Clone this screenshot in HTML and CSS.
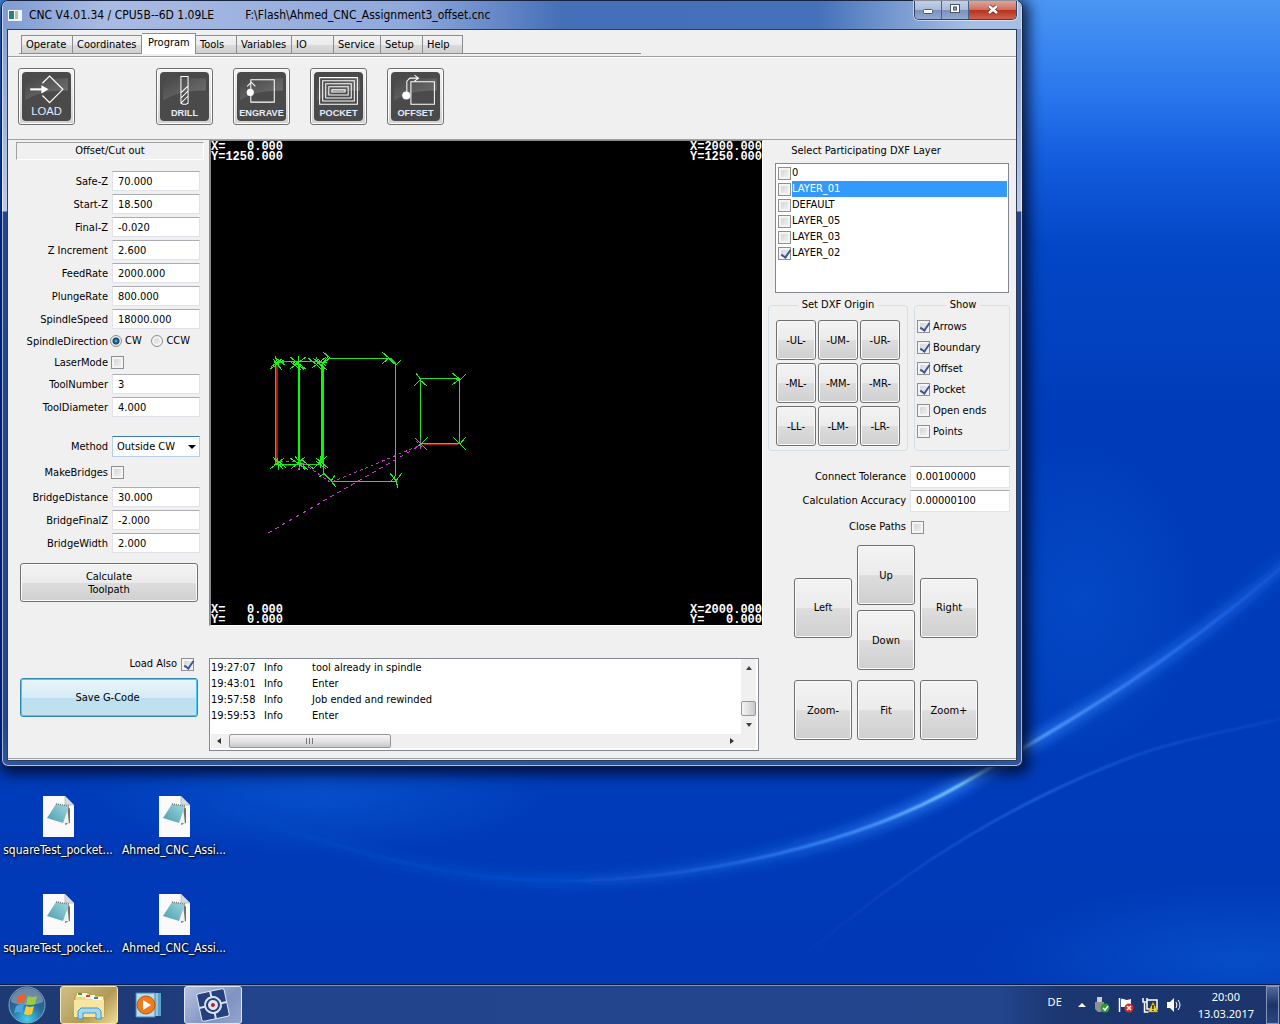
FILE: index.html
```html
<!DOCTYPE html>
<html lang="en">
<head>
	<meta charset="utf-8" />
	<title>CNC V4.01.34</title>
	<link rel="stylesheet" href="styles.css">
</head>
<body>

<svg class="wallpaper" viewBox="0 0 1280 1024" preserveAspectRatio="none" aria-hidden="true">
	<defs>
		<linearGradient id="sky" x1="0" y1="0" x2="0" y2="1">
			<stop offset="0" stop-color="#4a96f3"/>
			<stop offset=".09" stop-color="#2a77ee"/>
			<stop offset=".16" stop-color="#125bdc"/>
			<stop offset=".24" stop-color="#0347c6"/>
			<stop offset=".4" stop-color="#003cba"/>
			<stop offset=".75" stop-color="#003cba"/>
			<stop offset="1" stop-color="#0037b4"/>
		</linearGradient>
		<linearGradient id="ray" gradientUnits="userSpaceOnUse" x1="200" y1="0" x2="1280" y2="0">
			<stop offset="0" stop-color="#0a58d0" stop-opacity="0"/>
			<stop offset=".35" stop-color="#0a50cc" stop-opacity=".7"/>
			<stop offset=".5" stop-color="#1f6ce4"/>
			<stop offset=".62" stop-color="#4a96fa"/>
			<stop offset=".7" stop-color="#83d2ff"/>
			<stop offset=".8" stop-color="#4d94f8"/>
			<stop offset=".92" stop-color="#2468ea"/>
			<stop offset="1" stop-color="#1553d4"/>
		</linearGradient>
		<linearGradient id="glow" gradientUnits="userSpaceOnUse" x1="200" y1="0" x2="1280" y2="0">
			<stop offset="0" stop-color="#0a58d0" stop-opacity="0"/>
			<stop offset=".5" stop-color="#0c55d2" stop-opacity=".8"/>
			<stop offset=".7" stop-color="#2a78f0"/>
			<stop offset="1" stop-color="#0f52d0"/>
		</linearGradient>
		<linearGradient id="ray2" gradientUnits="userSpaceOnUse" x1="780" y1="0" x2="1280" y2="0">
			<stop offset="0" stop-color="#1058d6" stop-opacity="0"/>
			<stop offset=".5" stop-color="#2467e4"/>
			<stop offset="1" stop-color="#0f52cc" stop-opacity=".5"/>
		</linearGradient>
		<radialGradient id="pool"><stop offset="0" stop-color="#0a5ad4"/><stop offset="1" stop-color="#0a5ad4" stop-opacity="0"/></radialGradient>
		<filter id="soft" x="-10%" y="-50%" width="120%" height="200%"><feGaussianBlur stdDeviation="6"/></filter>
		<filter id="thin" x="-10%" y="-50%" width="120%" height="200%"><feGaussianBlur stdDeviation="1"/></filter>
	</defs>
	<rect width="1280" height="1024" fill="url(#sky)"/>
	<ellipse cx="1240" cy="960" rx="260" ry="80" fill="url(#pool)" opacity=".6"/>
	<ellipse cx="320" cy="795" rx="240" ry="60" fill="url(#pool)" opacity=".6"/>
	<ellipse cx="1080" cy="600" rx="120" ry="160" fill="url(#pool)" opacity=".4"/>
	<path d="M200 800C340 850 440 880 560 881C700 880 860 843 960 785S1170 665 1290 560" fill="none" stroke="url(#glow)" stroke-width="12" filter="url(#soft)"/>
	<path d="M200 800C340 850 440 880 560 881C700 880 860 843 960 785S1170 665 1290 560" fill="none" stroke="url(#ray)" stroke-width="3" filter="url(#thin)"/>
	<path d="M760 990C860 910 930 850 1048 793S1200 740 1290 716" fill="none" stroke="url(#ray2)" stroke-width="2" filter="url(#thin)"/>
</svg>

<!-- gradients shared by the icons -->
<svg class="defs" aria-hidden="true">
	<defs>
		<linearGradient id="gloss" x1="0" y1="0" x2="1" y2="1"><stop offset="0" stop-color="#444"/><stop offset="1" stop-color="#8a8a8a"/></linearGradient>
		<linearGradient id="pad" x1="1" y1="0" x2="0" y2="1"><stop offset="0" stop-color="#9fd8de"/><stop offset="1" stop-color="#4a9db0"/></linearGradient>
		<radialGradient id="orb" cx=".5" cy=".9" r=".9"><stop offset="0" stop-color="#3fd0f0"/><stop offset=".5" stop-color="#2a6e9e"/><stop offset="1" stop-color="#2b4a72"/></radialGradient>
		<symbol id="tile" viewBox="0 0 48 48">
			<rect width="48" height="48" rx="4" fill="#4a4a4a"/>
			<path d="M3 6h42v12C28 18 14 20 3 28z" fill="url(#gloss)" opacity=".7"/>
		</symbol>
		<symbol id="notefile" viewBox="0 0 31 41">
			<path d="M0 0h22l9 9v32H0z" fill="#fafafa"/>
			<path d="M22 0v9h9z" fill="#d5dadd" stroke="#8f9aa2" stroke-width=".5"/>
			<path d="M25 10l2 3v14l-5 2z" fill="#7d6f5f"/>
			<path d="M24 10l2 18-9-3z" fill="#eef3f4"/>
			<path d="M13 8l13 2-6 17-16-5z" fill="url(#pad)"/>
			<path d="M13 8l13 2" stroke="#777" stroke-width="1.500" stroke-dasharray="1 1"/>
		</symbol>
	</defs>
</svg>

<main class="desktop">
	<section class="window">
		<header class="titlebar">
			<svg class="appicon" width="14" height="12" viewBox="0 0 14 12"><rect width="14" height="12" fill="#f3f6f6"/><rect x="1" y="2" width="5" height="8" fill="#2e7d84"/><rect x="7" y="2" width="3" height="8" fill="#a8c4bd"/><path d="M0 .5h14" stroke="#8da5b8"/></svg>
			<h1>CNC V4.01.34 / CPU5B--6D 1.09LE</h1>
			<span class="file">F:\Flash\Ahmed_CNC_Assignment3_offset.cnc</span>
			<div class="winbuttons">
				<button type="button" aria-label="Minimize"><svg width="12" height="14" viewBox="0 0 12 14"><rect x="1.500" y="8.500" width="9" height="4" rx="1" fill="#fff" stroke="#4a556b"/></svg></button>
				<button type="button" aria-label="Maximize"><svg width="12" height="14" viewBox="0 0 12 14"><rect x="1.500" y="3.500" width="9" height="8" fill="#fff" stroke="#4a556b"/><rect x="4.500" y="6" width="3" height="3" fill="#8ea3c6" stroke="#4a556b"/></svg></button>
				<button type="button" class="close" aria-label="Close"><svg width="14" height="14" viewBox="0 0 14 14"><path d="M3 5l8 7M11 5l-8 7" stroke="#5d3030" stroke-width="4"/><path d="M3 5l8 7M11 5l-8 7" stroke="#fff" stroke-width="2.500"/></svg></button>
			</div>
		</header>

		<div class="client">
			<nav class="tabbar">
				<div class="tabs">
					<button type="button">Operate</button>
					<button type="button">Coordinates</button>
					<button type="button" class="active">Program</button>
					<button type="button">Tools</button>
					<button type="button">Variables</button>
					<button type="button">IO</button>
					<button type="button">Service</button>
					<button type="button">Setup</button>
					<button type="button">Help</button>
				</div>
			</nav>

			<div class="toolbar">
				<button type="button" class="load"><svg viewBox="0 0 48 48"><use href="#tile"/><g fill="none" stroke="#fff"><path d="M20 11l7-7 13 13-13 13-7-7" stroke-width="1.200"/><path d="M8 17h14" stroke-width="2"/></g><path d="M19 13l7 4-7 4z" fill="#fff"/><text x="24" y="42">LOAD</text></svg></button>
				<button type="button"><svg viewBox="0 0 48 48"><use href="#tile"/><path d="M20.500 4.500h7v26l-2 1h-3l-2-1zM21 20l6-6M21 25l6-6M21 30l6-6" fill="none" stroke="#fff"/><text class="small" x="24" y="43">DRILL</text></svg></button>
				<button type="button"><svg viewBox="0 0 48 48"><use href="#tile"/><path d="M13.500 7.500h23v22h-23zM13.500 20v-8M10 14l4-4 4 4" fill="none" stroke="#fff"/><circle cx="13" cy="20" r="3.500" fill="#fff"/><text class="small" x="24" y="43">ENGRAVE</text></svg></button>
				<button type="button"><svg viewBox="0 0 48 48"><use href="#tile"/><path d="M5.500 5.500h37v26h-37zM8.500 8.500h31v20h-31zM11.500 11.500h25v14h-25zM14.500 14.500h19v8h-19zM17.500 17.500h13v2h-13z" fill="none" stroke="#fff"/><text class="small" x="24" y="43">POCKET</text></svg></button>
				<button type="button"><svg viewBox="0 0 48 48"><use href="#tile"/><path d="M19.500 9.500h23v22h-23zM15.500 22V9l3-3h8M23 3l4 3-4 3" fill="none" stroke="#fff"/><circle cx="15" cy="23" r="4" fill="#fff"/><text class="small" x="24" y="43">OFFSET</text></svg></button>
			</div>

			<div class="main">
				<form class="params">
					<h2>Offset/Cut out</h2>
					<div class="rows">
						<label for="safez">Safe-Z</label><input type="text" id="safez" value="70.000" />
						<label for="startz">Start-Z</label><input type="text" id="startz" value="18.500" />
						<label for="finalz">Final-Z</label><input type="text" id="finalz" value="-0.020" />
						<label for="zinc">Z Increment</label><input type="text" id="zinc" value="2.600" />
						<label for="feed">FeedRate</label><input type="text" id="feed" value="2000.000" />
						<label for="plunge">PlungeRate</label><input type="text" id="plunge" value="800.000" />
						<label for="speed">SpindleSpeed</label><input type="text" id="speed" value="18000.000" />
						<span class="caption">SpindleDirection</span>
						<div class="radios">
							<label><input type="radio" name="dir" checked />CW</label>
							<label><input type="radio" name="dir" />CCW</label>
						</div>
						<label for="laser">LaserMode</label><div class="tick"><input type="checkbox" id="laser" /></div>
						<label for="toolno">ToolNumber</label><input type="text" id="toolno" value="3" />
						<label for="tooldia">ToolDiameter</label><input type="text" id="tooldia" value="4.000" />
					</div>
					<div class="rows bridges">
						<label for="method">Method</label>
						<div class="combo"><select id="method"><option>Outside CW</option></select></div>
						<label for="bridge">MakeBridges</label><div class="tick"><input type="checkbox" id="bridge" /></div>
						<label for="bdist">BridgeDistance</label><input type="text" id="bdist" value="30.000" />
						<label for="bfinal">BridgeFinalZ</label><input type="text" id="bfinal" value="-2.000" />
						<label for="bwidth">BridgeWidth</label><input type="text" id="bwidth" value="2.000" />
					</div>
					<button type="button" class="btn wide">Calculate<br/>Toolpath</button>
					<label class="loadalso">Load Also <input type="checkbox" checked /></label>
					<button type="button" class="btn wide default">Save G-Code</button>
				</form>

				<div class="center">
					<div class="view">
						<svg viewBox="211 141 551 484" preserveAspectRatio="xMinYMin meet" fill="none" shape-rendering="crispEdges">
							<path d="M276.500 365v98M280 464.500h16M424 443.500h34" stroke="#a81a10" stroke-width="2"/>
							<path d="M391 358l5 5" stroke="#b85a10"/>
							<path d="M275.500 364v100M279 361.500h42M278 464.500h44M322 365v98" stroke="#1fd51f"/>
							<path d="M299 364v98M322 364v98" stroke="#0f0" stroke-width="2"/>
							<path d="M328 358.500h62l5 5V476l-4 5.500h-59l-9-9V366M420.500 378.500h39v65h-39z" stroke="#2be02b"/>
							<!-- direction arrows -->
							<g stroke="#1df01d">
								<path d="M270 369l14-9M273 359l9 11M271 367l10-8M275 356l5 12M290 357l16 12M290 369l16-12M293 359l11 11M298 356v14M288 361h20M313 358l14 12M312 368l14-11M316 357l7 13M320 366l8-9M274 362h10M317 362h10"/>
								<path d="M274 367l8-8M277 359l8 6M292 361l12 8M291 362l10 8M308 358l8 6 8 8M318 359l8 7"/>
								<path d="M270 469l14-11M273 457l10 12M277 458l2 12M290 458l16 11M291 469l14-12M295 456l10 14M299 456v14M288 464h18M314 468l13-12M316 458l12 10M320 456v12M274 464h10M300 462l8 8"/>
								<path d="M276 459l10 9M293 460l12 8M302 460l12 9M316 461l10 8"/>
								<path d="M323 352l7 6-10 8M382 352l7 6-7 6M389 359l7 6 5-5M390 473l6 8 6-8M389 481h7l2 7M335 475l-4 6 5 6M319 477l6-4M416 373l5 7M414 386l6-6 7 6M452 373l8 6-8 6M453 378l7 2 6-6M453 437l7 7 6-7M453 443l7 1 6 6M428 437l-7 7 6 6M415 438l6 6-6 4"/>
							</g>
							<path d="M268 533L421 445" stroke="#d132d1" stroke-dasharray="4 4"/>
							<path d="M332 482L421 445M280 462l20-1 30 21M298 470l6-8M416 441l8 8M420 440v10" stroke="#c93ac9" stroke-dasharray="3 3"/>
						</svg>
						<pre class="tl">X=   0.000
Y=1250.000</pre>
						<pre class="tr">X=2000.000
Y=1250.000</pre>
						<pre class="bl">X=   0.000
Y=   0.000</pre>
						<pre class="br">X=2000.000
Y=   0.000</pre>
					</div>

					<div class="log">
						<div class="entries">
							<table>
								<tr><td>19:27:07</td><td>Info</td><td>tool already in spindle</td></tr>
								<tr><td>19:43:01</td><td>Info</td><td>Enter</td></tr>
								<tr><td>19:57:58</td><td>Info</td><td>Job ended and rewinded</td></tr>
								<tr><td>19:59:53</td><td>Info</td><td>Enter</td></tr>
							</table>
						</div>
						<div class="vscroll"><i class="arrow up"></i><i class="thumb"></i><i class="arrow down"></i></div>
						<div class="hscroll"><i class="arrow left"></i><i class="thumb"></i><i class="arrow right"></i></div>
					</div>
				</div>

				<div class="side">
					<h2>Select Participating DXF Layer</h2>
					<div class="layers">
						<label><input type="checkbox" /><span>0</span></label>
						<label class="selected"><input type="checkbox" /><span>LAYER_01</span></label>
						<label><input type="checkbox" /><span>DEFAULT</span></label>
						<label><input type="checkbox" /><span>LAYER_05</span></label>
						<label><input type="checkbox" /><span>LAYER_03</span></label>
						<label><input type="checkbox" checked /><span>LAYER_02</span></label>
					</div>

					<div class="groups">
						<fieldset class="origin">
							<legend>Set DXF Origin</legend>
							<div class="pad">
								<button type="button" class="btn">-UL-</button>
								<button type="button" class="btn">-UM-</button>
								<button type="button" class="btn">-UR-</button>
								<button type="button" class="btn">-ML-</button>
								<button type="button" class="btn">-MM-</button>
								<button type="button" class="btn">-MR-</button>
								<button type="button" class="btn">-LL-</button>
								<button type="button" class="btn">-LM-</button>
								<button type="button" class="btn">-LR-</button>
							</div>
						</fieldset>
						<fieldset class="show">
							<legend>Show</legend>
							<label><input type="checkbox" checked />Arrows</label>
							<label><input type="checkbox" checked />Boundary</label>
							<label><input type="checkbox" checked />Offset</label>
							<label><input type="checkbox" checked />Pocket</label>
							<label><input type="checkbox" />Open ends</label>
							<label><input type="checkbox" />Points</label>
						</fieldset>
					</div>

					<div class="tolerance">
						<label for="tol">Connect Tolerance</label><input type="text" id="tol" value="0.00100000" />
						<label for="acc">Calculation Accuracy</label><input type="text" id="acc" value="0.00000100" />
						<label for="closep">Close Paths</label><div class="tick"><input type="checkbox" id="closep" /></div>
					</div>

					<div class="move">
						<button type="button" class="btn">Left</button>
						<div class="updown">
							<button type="button" class="btn">Up</button>
							<button type="button" class="btn">Down</button>
						</div>
						<button type="button" class="btn">Right</button>
						<button type="button" class="btn">Zoom-</button>
						<button type="button" class="btn">Fit</button>
						<button type="button" class="btn">Zoom+</button>
					</div>
				</div>
			</div>
		</div>
	</section>

	<div class="files">
		<a href="#"><svg width="31" height="41"><use href="#notefile"/></svg>squareTest_pocket...</a>
		<a href="#"><svg width="31" height="41"><use href="#notefile"/></svg>Ahmed_CNC_Assi...</a>
		<a href="#"><svg width="31" height="41"><use href="#notefile"/></svg>squareTest_pocket...</a>
		<a href="#"><svg width="31" height="41"><use href="#notefile"/></svg>Ahmed_CNC_Assi...</a>
	</div>
</main>

<footer class="taskbar">
	<button type="button" class="start" aria-label="Start">
		<svg width="38" height="38" viewBox="0 0 38 38">
			<circle cx="19" cy="19" r="18" fill="url(#orb)" stroke="#7fa6c4"/>
			<path d="M3 16a16 14 0 0 1 32 0c-8 4-24 4-32 0z" fill="#fff" opacity=".3"/>
			<path d="M10 10q4-3 8-1l-2 8q-4-2-8 1z" fill="#e8602c"/>
			<path d="M20 10q4 2 9 0l-2 8q-5 2-9 0z" fill="#9ccb3b"/>
			<path d="M8 20q4-3 8-1l-2 8q-4-2-8 0z" fill="#4fa3e3"/>
			<path d="M18 20q4 2 8 0l-2 8q-4 2-8 0z" fill="#fbc935"/>
		</svg>
	</button>
	<button type="button" class="task explorer" aria-label="Explorer">
		<svg width="34" height="32" viewBox="0 0 34 32">
			<path d="M3 8l2-4h12l1 3h14v21H2z" fill="#f1d77e" stroke="#b98e36" stroke-width=".7"/>
			<path d="M5 4h10v4H5zM13 6h10v4H13zM21 8h10v4H21z" fill="#fffbe8"/>
			<path d="M6 4h4v2H6z" fill="#2fa84a"/><path d="M14 6h4v2h-4z" fill="#d9472b"/><path d="M22 8h4v2h-4z" fill="#2c86c9"/>
			<path d="M2 11h30v17H2z" fill="#f8e6a0"/>
			<path d="M6 30v-8l3-3h17l3 3v8h-5v-6H11v6z" fill="#a3d8ef" stroke="#4795be"/>
		</svg>
	</button>
	<button type="button" class="task" aria-label="Media Player">
		<svg width="28" height="28" viewBox="0 0 28 28">
			<path d="M8 2h18v23H8z" fill="#5aa2cc"/><path d="M5 2h18v23H5z" fill="#8cc7e4"/><path d="M1 2h19v24H1z" fill="#b5dff0" stroke="#4389b5"/>
			<circle cx="11" cy="14" r="9" fill="#ee7b1e" stroke="#c9540b"/><path d="M8 9l8 5-8 5z" fill="#fff"/>
		</svg>
	</button>
	<button type="button" class="task cnc" aria-label="CNC">
		<svg width="34" height="34" viewBox="0 0 34 34">
			<g transform="rotate(-12 17 17)">
				<rect x="3" y="3" width="28" height="28" rx="2" fill="#24407f" stroke="#e3e9f5"/>
				<path d="M17 3v28M3 17h28" stroke="#dbe3f3" stroke-width="2"/>
				<circle cx="17" cy="17" r="8" fill="#24407f" stroke="#dbe3f3" stroke-width="2"/><circle cx="17" cy="17" r="5" fill="#dfe6f2"/><circle cx="17" cy="17" r="2" fill="#c8202a"/>
			</g>
		</svg>
	</button>
	<div class="tray">
		<span class="lang">DE</span>
		<svg width="8" height="5" viewBox="0 0 8 5"><path d="M0 5l4-4 4 4z" fill="#fff"/></svg>
		<svg width="16" height="18" viewBox="0 0 16 18"><path d="M3 1h5v5H3z" fill="#ccc"/><path d="M1 6h9v7l-3 3H4l-3-3z" fill="#8d9094"/><circle cx="11" cy="12" r="4.500" fill="#2b9b36"/><path d="M9 12l2 2 3-4" fill="none" stroke="#fff" stroke-width="1.500"/></svg>
		<svg width="16" height="18" viewBox="0 0 16 18"><path d="M1.500 2v14" stroke="#fff" stroke-width="1.500"/><path d="M3 3c3-1 4 1 6 1l4-1v8H3z" fill="#fff"/><circle cx="11" cy="12" r="4.500" fill="#dc2a20"/><path d="M9 10l4 4M13 10l-4 4" stroke="#fff" stroke-width="1.500"/></svg>
		<svg width="16" height="18" viewBox="0 0 16 18"><path d="M5 4h10v9H5zM2.500 7v9h4M1 2v4h4V2" fill="none" stroke="#fff" stroke-width="1.500"/><path d="M11 6l5 10H6z" fill="#fbd11d" stroke="#8f7510" stroke-width=".5"/><path d="M11 9v4M11 14v1" stroke="#222" stroke-width="1.500"/></svg>
		<svg width="16" height="18" viewBox="0 0 16 18"><path d="M1 6h3l4-4v14l-4-4H1z" fill="#fff"/><path d="M10 6q2 3 0 6M12 4q4 5 0 10" fill="none" stroke="#fff"/></svg>
		<time class="clock">20:00<br/>13.03.2017</time>
	</div>
	<button type="button" class="peek" aria-label="Show desktop"></button>
</footer>

</body>
</html>
```
FILE: styles.css
```css
*{box-sizing:border-box;}
body{margin:0;min-height:100vh;display:flex;flex-direction:column;position:relative;overflow-x:hidden;background:#003bb8;font:11px/14px "DejaVu Sans Condensed","DejaVu Sans",sans-serif;color:#000;}
button,input,select{font:inherit;color:inherit;margin:0;}
button{padding:0;}
svg{display:block;}
h1,h2{margin:0;font-size:11px;font-weight:normal;}
.defs{position:absolute;width:0;height:0;}
.wallpaper{position:absolute;left:0;top:0;width:100%;height:100%;z-index:-1;}
.desktop{flex:1;}

/* window frame */
.window{width:calc(80vw - 2px);margin-left:1px;padding:0 5px 5px;border:1px solid #16233f;border-radius:7px;background:linear-gradient(#7d9ad2,#c0c9e6 210px,#25468e 211px,#234690 95%,#2e57a0);box-shadow:inset 0 0 0 1px rgba(255,255,255,.6),2px 3px 14px 4px rgba(0,0,20,.75);}
.titlebar{display:flex;align-items:center;height:28px;margin:0 -4px;padding:0 4px 0 5px;border-radius:6px 6px 0 0;background:linear-gradient(90deg,#7f9bd3,#a9bbe2 10%,#8fa9dc 40%,#456fb8 55%,#4571bb 80%,#a6bfe4 95%);}
.titlebar h1,.titlebar .file{font:12px/16px "DejaVu Sans Condensed",sans-serif;}
.appicon{margin-right:7px;}
.titlebar .file{margin-left:31px;}
.winbuttons{display:flex;align-self:flex-start;margin-left:auto;border:1px solid #35445f;border-top:0;border-radius:0 0 5px 5px;overflow:hidden;box-shadow:0 0 0 1px rgba(255,255,255,.5);}
.winbuttons button{display:flex;justify-content:center;width:27px;height:18px;border:0;border-right:1px solid #4c5f85;background:linear-gradient(#c3d1e8,#a9bcdb 48%,#7790bb 50%,#93aad2);}
.winbuttons .close{width:47px;border-right:0;background:linear-gradient(#e2a397,#cf6f60 48%,#b4321f 50%,#d0604a);}
.client{border:1px solid #2b3c5c;background:#f0f0f0;}

/* tabs */
.tabbar{height:27px;padding:3px 0 0 11px;border-bottom:1px solid #a0a0a0;}
.tabs{display:grid;grid-template-columns:52px 69px 54px 41px 55px 42px 47px 42px 40px;align-items:end;width:622px;height:21px;padding-left:2px;border-bottom:1px solid #898c95;}
.tabs button{height:18px;padding-left:4px;border:1px solid #898c95;border-width:1px 1px 0 0;background:linear-gradient(#f3f3f3,#ebebeb 50%,#dcdcdc 51%,#cfcfcf);text-align:left;white-space:nowrap;}
.tabs button:first-child{border-left-width:1px;}
.tabs button.active{height:21px;margin-bottom:-1px;padding:0 0 2px 6px;background:#fff;}

/* tool icons */
.toolbar{display:flex;gap:20px;height:83px;padding:10px;border-top:1px solid #fff;border-bottom:1px solid #a0a0a0;}
.toolbar button{width:57px;height:57px;padding:3px;border:1px solid #707070;border-radius:3px;background:linear-gradient(#f4f4f4,#d2d2d2);box-shadow:inset 0 0 0 1px #fcfcfc;}
.toolbar .load{margin-right:61px;}
.toolbar text{font:11px "Liberation Sans",sans-serif;fill:#e6ebff;text-anchor:middle;}
.toolbar .small{font-size:9px;font-weight:bold;}

.main{display:grid;grid-template-columns:201px 1fr 252px;padding-bottom:7px;border-bottom:1px solid #a0a0a0;margin-bottom:1px;}

/* controls */
input[type=text]{width:100%;height:20px;padding:0 5px;border:1px solid #e2e3ea;border-top-color:#abadb3;background:#fff;}
input[type=checkbox],input[type=radio]{appearance:none;flex:none;position:relative;width:13px;height:13px;border:1px solid #8e8f8f;background:linear-gradient(135deg,#cdd1d5,#f4f4f4);box-shadow:inset 0 0 0 2px #f4f4f4;}
input[type=radio]{width:12px;height:12px;border-radius:50%;}
input[type=radio]:checked{background:radial-gradient(circle,#5fc4ec 0,#1b5f8e 2px,#173c5c 3px,#e8eef2 4px);box-shadow:none;}
input[type=checkbox]:checked::after{content:"";position:absolute;left:4px;top:0;width:4px;height:8px;border:solid #3f5596;border-width:0 2px 2px 0;transform:rotate(35deg);}
.tick{display:flex;align-items:center;}
.btn{border:1px solid #707070;border-radius:3px;background:linear-gradient(#f3f3f3,#ebebeb 50%,#dddddd 51%,#cfcfcf);box-shadow:inset 0 0 0 1px #fafafa;line-height:13px;}

/* left column */
.params{display:flex;flex-direction:column;padding:2px 0 0 8px;}
.params h2{height:18px;margin:0 5px 11px 0;padding-top:1px;border:1px solid #a0a0a0;border-right-color:#fff;border-bottom-color:#fff;text-align:center;}
.rows{display:grid;grid-template-columns:92px 88px;column-gap:4px;row-gap:3px;grid-auto-rows:20px;grid-template-rows:repeat(7,20px) 18px 18px;align-items:center;}
.rows > label,.rows .caption{text-align:right;padding-top:1px;}
.bridges{grid-template-rows:21px 24px;margin-top:19px;}
.radios{display:flex;justify-content:space-between;margin:0 10px 0 -2px;}
.radios label{display:flex;align-items:center;gap:3px;}
.rows .tick{margin-left:-1px;}
.combo{position:relative;height:21px;}
.combo select{appearance:none;width:100%;height:100%;padding:0 4px;border:1px solid #b5cfe7;border-top-color:#3d7bad;border-radius:0;background:#fff;}
.combo::after{content:"";position:absolute;right:4px;top:9px;border:4px solid transparent;border-top-color:#000;border-bottom:0;}
.wide{height:39px;margin:10px 11px 0 4px;}
.loadalso{display:flex;align-items:center;justify-content:flex-end;gap:4px;height:20px;margin:52px 15px 4px 0;}
.wide.default{margin-top:0;padding-right:3px;border-color:#2c8ab5;background:linear-gradient(#eaf6fb,#d5ebf5 50%,#bcdff0 51%,#c4e2ef);box-shadow:inset 0 0 0 1px #42cdf3;}

/* tool path view */
.center{min-width:0;}
.view{position:relative;height:486px;margin-right:1px;border:solid #8a8a8a;border-width:1px 1px 1px 2px;border-right-color:#fff;border-bottom-color:#fff;background:#000;}
.view svg{width:100%;height:484px;}
.view pre{position:absolute;margin:0;font:bold 12px/10px "Liberation Mono",monospace;color:#fff;}
.tl{left:0;top:1px;}
.tr{right:0;top:1px;}
.bl{left:0;bottom:0;}
.br{right:0;bottom:0;}

/* message log */
.log{display:grid;grid-template:75px 14px / 1fr 17px;margin:32px 5px 0 0;padding-bottom:2px;border:1px solid #828790;background:#fff;}
.entries{padding-top:1px;overflow:hidden;}
.log table{border-collapse:collapse;}
.log td{height:16px;padding:0 0 0 1px;white-space:nowrap;}
.log td:nth-child(1){width:53px;}
.log td:nth-child(2){width:48px;}
.vscroll,.hscroll{display:flex;align-items:center;background:#f0f0f0;}
.vscroll{flex-direction:column;padding:7px 0;margin-right:2px;}
.hscroll{padding:0 22px 0 6px;margin:0 2px 0 1px;grid-column:1/3;}
.thumb{border:1px solid #979797;border-radius:2px;}
.vscroll .thumb{width:15px;height:15px;margin:auto 0 7px;background:linear-gradient(90deg,#f5f5f5,#e0e0e0 50%,#c8c8cc);}
.hscroll .thumb{width:162px;height:14px;margin:0 auto 0 8px;background:repeating-linear-gradient(90deg,#777 0 1px,transparent 1px 3px) center/8px 6px no-repeat,linear-gradient(#f5f5f5,#e4e4e6 50%,#c8c8cc);}
.arrow{border:3px solid transparent;}
.up{border-bottom:4px solid #444;border-top:0;}
.down{border-top:4px solid #444;border-bottom:0;}
.left{border-right:4px solid #333;border-left:0;}
.right{border-left:4px solid #333;border-right:0;}

/* right column */
.side{padding:4px 6px 0 4px;}
.side h2{height:19px;padding:0 46px 0 0;text-align:center;}
.layers{height:130px;margin:0 1px 0 7px;padding:1px;border:1px solid #828790;background:#fff;}
.layers label{display:flex;align-items:center;height:16px;padding-left:1px;}
.layers span{flex:1;margin-left:1px;line-height:16px;}
.layers .selected span{background:#3399ff;color:#fff;}
.groups{display:flex;gap:6px;margin-top:5px;}
fieldset{min-width:0;margin:0;border:1px solid #d5dfe5;border-radius:4px;}
legend{margin:0 auto;padding:0 4px;}
.origin{padding:8px 7px 4px;}
.pad{display:grid;grid-template-columns:repeat(3,40px);grid-auto-rows:40px;gap:3px 2px;}
.show{flex:1;padding:4px 0 0 2px;}
.show label{display:flex;align-items:center;gap:3px;height:21px;}
.tolerance{display:grid;grid-template-columns:1fr 100px;gap:2px 4px;align-items:center;margin-top:15px;}
.tolerance input[type=text]{height:22px;padding-bottom:2px;}
.tolerance label{text-align:right;}
.tolerance .tick{height:26px;padding-left:1px;}
.move{display:grid;grid-template-columns:repeat(3,58px);gap:10px 5px;align-items:center;margin:5px 0 0 26px;}
.move .btn{width:58px;height:60px;}
.updown{display:grid;gap:5px;}

/* desktop icons */
.files{display:grid;grid-template-columns:116px 116px;grid-auto-rows:62px;row-gap:36px;margin-top:29px;font:12px/16px "DejaVu Sans Condensed",sans-serif;}
.files a{display:flex;flex-direction:column;align-items:center;gap:5px;color:#fff;text-decoration:none;text-shadow:1px 1px 2px #000,0 0 3px #000;white-space:nowrap;}

.taskbar{display:flex;align-items:center;height:40px;border-top:1px solid #0d1c3f;box-shadow:inset 0 1px 0 #7d92bd;background:linear-gradient(90deg,#1d3a72,#1e3b78 12%,#22448c 20%,#23458c 78%,#1b3670 83%,#1b366d);color:#fff;font:11px/16px "Noto Sans","Open Sans",sans-serif;}
.taskbar button{flex:none;background:none;border:0;}
.start{width:38px;}
.taskbar .start{margin:0 14px 0 8px;}
.taskbar .task{display:flex;align-items:center;justify-content:center;width:58px;height:38px;margin:0 2px 0 0;border:1px solid transparent;border-radius:3px;}
.taskbar .task.cnc{margin-left:4px;border-color:#dfe6f5;background:linear-gradient(135deg,#b9c3e0,#7f92c1 60%,#93a4cd);}
.taskbar .explorer{border-color:#f4e8b8;background:linear-gradient(135deg,#cfc089,#b29a56 60%,#f0dc96);}
.tray{display:flex;align-items:center;gap:8px;margin-left:auto;}
.lang{margin:-6px 8px 0 0;}
.clock{margin:0 4px 0 8px;text-align:center;line-height:17px;}
.taskbar .peek{width:13px;height:38px;margin:0 1px 0 8px;border:1px solid #8596b8;background:linear-gradient(#4f6a9f,#1c3468 50%,#2c467e);}
```
